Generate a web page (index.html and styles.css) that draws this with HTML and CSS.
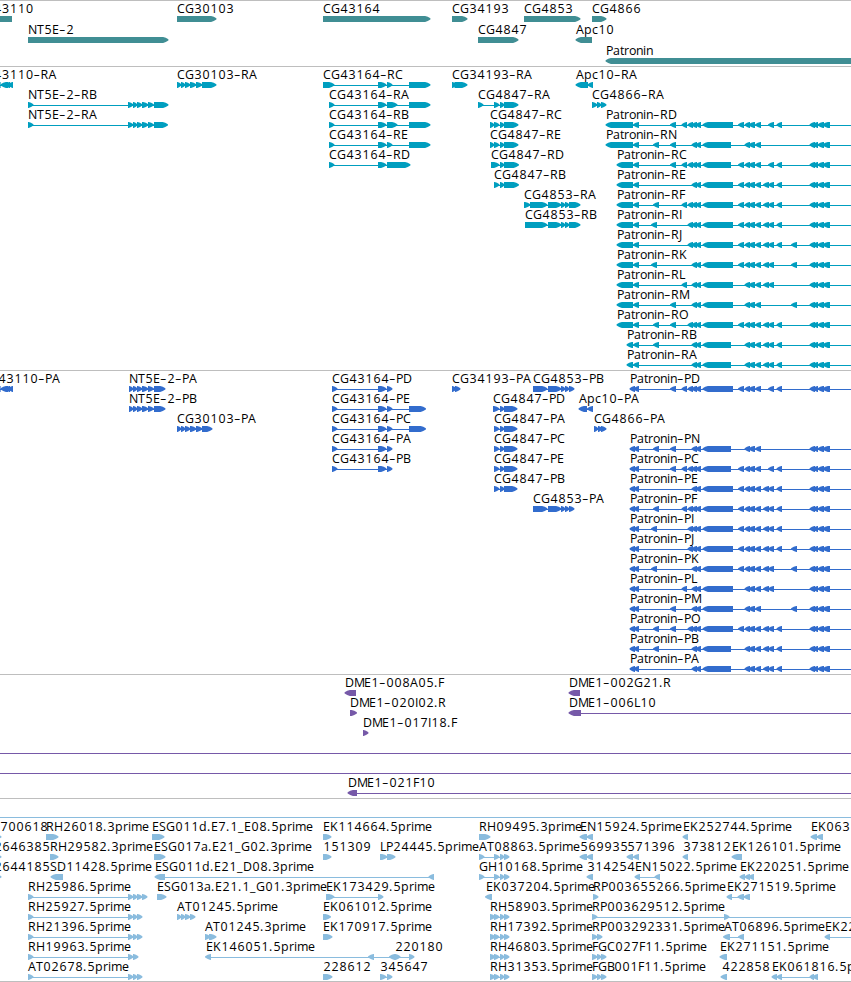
FILE: index.html
```html
<!DOCTYPE html>
<html lang="en">
<head>
<meta charset="utf-8">
<title>Genome tracks</title>
<link rel="stylesheet" href="styles.css">
</head>
<body>
<main class="browser">
  <section class="track genes" id="genes"></section>
  <section class="track transcripts" id="transcripts"></section>
  <section class="track proteins" id="proteins"></section>
  <section class="track clones" id="clones"></section>
  <section class="track ests" id="ests"></section>
</main>
<script src="tracks.js"></script>
</body>
</html>
```
FILE: styles.css
```css
body {
  margin: 0;
  background: #fff;
}

.browser {
  display: flex;
  flex-direction: column;
  width: 851px;
  height: 981px;
  overflow: hidden;
  border-bottom: 1px solid #bebebe;
}

.track {
  box-sizing: border-box;
  border-top: 1px solid #bebebe;
  overflow: hidden;
}

.track svg {
  display: block;
  width: 851px;
  height: 100%;
}

.track text {
  font: 12.4px "Open Sans", "Noto Sans", sans-serif;
  fill: #000;
}

.track .dash {
  font-size: 20px;
  font-weight: 300;
}

.track rect {
  shape-rendering: crispEdges;
}

.genes { height: 66px; color: #408e94; }
.transcripts { height: 304px; color: #009ebf; }
.proteins { height: 304px; color: #326ccd; }
.clones { height: 124px; color: #7659a8; }
.ests { height: 183px; color: #8abcde; }
```
FILE: tracks.js
```javascript
const SVG = "http://www.w3.org/2000/svg";
const WIDTH = 851;

// Horizontal advance of each label character, in pixels.
const ADVANCE = {
  A: 8, B: 7, C: 8, D: 9, E: 7, F: 6, G: 9, H: 9, I: 3, J: 4, K: 8, L: 6, M: 10,
  N: 9, O: 9, P: 7, R: 8, S: 7, T: 7, a: 7, c: 6, d: 8, e: 7, i: 3, m: 11, n: 7,
  o: 7, p: 8, r: 5, t: 4, "-": 7, ".": 4, _: 6
};

function add(parent, name, attrs) {
  const el = document.createElementNS(SVG, name);
  for (const key in attrs) el.setAttribute(key, attrs[key]);
  parent.appendChild(el);
  return el;
}

function drawLabel(svg, label, x, y) {
  const text = add(svg, "text", { y });
  // Hyphens are drawn wider than the font's own, lowered to the same height.
  for (const part of label.split(/(-)/)) {
    if (!part) continue;
    const xs = [];
    for (const ch of part) {
      const digit = ch >= "0" && ch <= "9";
      xs.push(x + (digit ? 0.4 : 0));
      x += digit ? 8 : ADVANCE[ch];
    }
    const attrs = { x: xs.join(" "), y: part === "-" ? y + 1.6 : y };
    if (part === "-") attrs.class = "dash";
    add(text, "tspan", attrs).textContent = part;
  }
}

function drawBlock(svg, x0, x1, y, dir) {
  const head = Math.min(x1 - x0, 5.5);
  const tip = dir > 0 ? x1 + 0.4 : x0 - 0.4;
  const base = dir > 0 ? x0 : x1;
  const neck = dir > 0 ? x1 - head + 0.6 : x0 + head - 0.6;
  const mid = (tip + neck) / 2;
  const pts = [[base, y], [neck, y], [mid, y + 0.8], [tip, y + 2.3], [tip, y + 3.5],
    [mid, y + 5.1], [neck, y + 6], [base, y + 6]];
  add(svg, "polygon", { points: pts.join(" "), fill: "currentColor" });
}

// Items: [label, label x, row, direction, blocks, optional line end]
function drawTrack(id, opts, items) {
  const svg = add(document.getElementById(id), "svg", {});
  for (const [label, x, row, dir, blocks, lineEnd] of items) {
    const top = opts.top + row * opts.pitch;
    const start = blocks.length ? blocks[0][0] + 1 : 0;
    const end = lineEnd || blocks[blocks.length - 1][1] - 1;
    if (blocks.length !== 1 || lineEnd) {
      add(svg, "rect", { x: start, y: top + 3, width: end - start, height: 1, fill: "currentColor" });
    }
    for (const [a, b] of blocks) drawBlock(svg, a, b, top, dir);
    if (label) drawLabel(svg, label, x, top - 3);
  }
  return svg;
}

const EXONS = {
  a: [[606, 633]], A: [[617, 633]], B: [[627, 633]], C: [[630, 635], [634, 639]],
  b: [[633.5, 639]], c: [[653.5, 659]], d: [[651.5, 657]], e: [[670.5, 676]],
  f: [[682, 687]], g: [[688, 693]], h: [[692, 697], [696, 701]],
  i: [[703, 733]], j: [[703, 731]], k: [[738.5, 744]], l: [[745, 750], [749, 755]],
  m: [[755.5, 761]], n: [[763.5, 769]], o: [[768.5, 774]], p: [[777, 782]],
  q: [[791.5, 797]], z: [[810, 815], [813.5, 818], [818, 824], [823, 830]]
};
const patronin = (suffix, x, row, code) =>
  ["Patronin-" + suffix, x, row, -1, [...code].flatMap(c => EXONS[c]), WIDTH];

drawTrack("genes", { top: 15, pitch: 21 }, [
  ["43110", -6.4, 0, -1, [[-10, 12]]],
  ["NT5E-2", 28, 1, 1, [[28, 168]]],
  ["CG30103", 177, 0, 1, [[177, 216]]],
  ["CG43164", 323, 0, 1, [[323, 430]]],
  ["CG34193", 452, 0, 1, [[452, 467]]],
  ["CG4847", 478, 1, 1, [[478, 518]]],
  ["CG4853", 524, 0, 1, [[524, 580]]],
  ["CG4866", 592, 0, 1, [[592, 606]]],
  ["Apc10", 576, 1, -1, [[576, 592]]],
  ["Patronin", 606, 2, -1, [[606, 860]]]
]);

const left = [[-6, 0.6], [1, 8], [5, 10], [8.5, 13]];
const nt = [[128, 133], [133, 137], [137, 142], [142, 148], [148, 153.5]];
const cg30 = [[177, 181], [181, 185], [185, 190], [190, 196], [196, 202]];
const tail48 = [[494, 499], [500, 504]];
const mid53 = [[548, 561], [561, 565], [565, 569]];

drawTrack("transcripts", { top: 15, pitch: 20 }, [
  ["43110-RA", -6.4, 0, -1, left],
  ["NT5E-2-RB", 28, 1, 1, [[28, 33], ...nt, [154, 168]]],
  ["NT5E-2-RA", 28, 2, 1, [[28, 33], ...nt, [154, 167.5]]],
  ["CG30103-RA", 177, 0, 1, [...cg30, [202, 216]]],
  ["CG43164-RC", 323, 0, 1, [[323, 334], [378, 386], [387, 392], [409, 430]]],
  ["CG43164-RA", 329, 1, 1, [[329, 334], [378, 386], [387, 397], [409, 430]]],
  ["CG43164-RB", 329, 2, 1, [[329, 334], [378, 386], [387, 397], [409, 430]]],
  ["CG43164-RE", 329, 3, 1, [[329, 334], [378, 386], [387, 392], [409, 430]]],
  ["CG43164-RD", 329, 4, 1, [[329, 334], [378, 386], [387, 410]]],
  ["CG34193-RA", 452, 0, 1, [[452, 456], [454.5, 467]]],
  ["CG4847-RA", 478, 1, 1, [[478, 483], ...tail48, [504, 518]]],
  ["CG4847-RC", 490, 2, 1, [[490, 494], ...tail48, [504, 518]]],
  ["CG4847-RE", 490, 3, 1, [[490, 494], ...tail48, [504, 518]]],
  ["CG4847-RD", 491, 4, 1, [[491, 499], [500, 504], [504, 518.5]]],
  ["CG4847-RB", 494, 5, 1, [...tail48, [504, 518.5]]],
  ["CG4853-RA", 524, 6, 1, [[524, 530], [530, 547], ...mid53, [569, 580]]],
  ["CG4853-RB", 525, 7, 1, [[525, 547], ...mid53, [569, 580]]],
  ["Apc10-RA", 576, 0, -1, [[576, 588], [588, 593]]],
  ["CG4866-RA", 592, 1, 1, [[592, 597], [597, 601], [601, 606]]],
  patronin("RD", 606, 2, "abefghiklmopz"),
  patronin("RN", 606, 3, "abcehjlmz"),
  patronin("RC", 617, 4, "Abefghjklmopz"),
  patronin("RE", 617, 5, "Abhiklmnopz"),
  patronin("RF", 617, 6, "Abcfghiklmnopz"),
  patronin("RI", 617, 7, "Abdghiklmnopz"),
  patronin("RJ", 617, 8, "Abghiklmnopqz"),
  patronin("RK", 617, 9, "Abdhiklmnoqz"),
  patronin("RL", 617, 10, "Abfhilmnoz"),
  patronin("RM", 617, 11, "Abehilmqz"),
  patronin("RO", 617, 12, "Abceghiklmnopz"),
  patronin("RB", 627, 13, "Bbchjlmnopz"),
  patronin("RA", 627, 14, "Bbhjlmnopz")
]);

const ntP = [[129, 133], ...nt.slice(1), [154, 165]];
const shortP = [[332, 337], [378, 386], [387, 392]];
const p48 = [...tail48, [504, 517]];
const p53 = [[533, 547], ...mid53, [569, 574]];

drawTrack("proteins", { top: 15, pitch: 20 }, [
  ["43110-PA", -2, 0, -1, left],
  ["NT5E-2-PA", 129, 0, 1, ntP],
  ["NT5E-2-PB", 129, 1, 1, ntP],
  ["CG30103-PA", 177, 2, 1, [...cg30, [202, 212]]],
  ["CG43164-PD", 332, 0, 1, shortP],
  ["CG43164-PE", 332, 1, 1, [...shortP, [409, 425.5]]],
  ["CG43164-PC", 332, 2, 1, [...shortP, [409, 425.5]]],
  ["CG43164-PA", 332, 3, 1, shortP],
  ["CG43164-PB", 332, 4, 1, shortP],
  ["CG34193-PA", 452, 0, 1, [[452, 456], [455, 460]]],
  ["CG4853-PB", 533, 0, 1, p53],
  ["CG4847-PD", 493, 1, 1, [[493, 499], [500, 504], [504, 517]]],
  ["CG4847-PA", 494, 2, 1, p48],
  ["CG4847-PC", 494, 3, 1, p48],
  ["CG4847-PE", 494, 4, 1, p48],
  ["CG4847-PB", 494, 5, 1, p48],
  ["CG4853-PA", 533, 6, 1, p53],
  ["Apc10-PA", 579, 1, -1, [[579, 587], [587.5, 593]]],
  ["CG4866-PA", 594, 2, 1, [[594, 598], [598, 602], [601, 606]]],
  patronin("PD", 630, 0, "Cefghiklmopz"),
  patronin("PN", 630, 3, "Ccehjlmz"),
  patronin("PC", 630, 4, "Cefghjklmopz"),
  patronin("PE", 630, 5, "Chiklmnopz"),
  patronin("PF", 630, 6, "Ccfghiklmnopz"),
  patronin("PI", 630, 7, "Cdghiklmnopz"),
  patronin("PJ", 630, 8, "Cghiklmnopqz"),
  patronin("PK", 630, 9, "Cdhiklmnoqz"),
  patronin("PL", 630, 10, "Cfhilmnoz"),
  patronin("PM", 630, 11, "Cehilmqz"),
  patronin("PO", 630, 12, "Cceghiklmnopz"),
  patronin("PB", 630, 13, "Cchjlmnopz"),
  patronin("PA", 630, 14, "Chjlmnopz")
]);

drawTrack("clones", { top: 15, pitch: 20 }, [
  ["DME1-008A05.F", 345, 0, -1, [[345, 356]]],
  ["DME1-020I02.R", 350, 1, 1, [[350, 356.5]]],
  ["DME1-017I18.F", 363, 2, 1, [[363, 368]]],
  ["DME1-002G21.R", 569, 0, -1, [[569, 580]]],
  ["DME1-006L10", 569, 1, -1, [[569, 581]], WIDTH],
  ["", 0, 3, 1, [], WIDTH],
  ["", 0, 4, 1, [], WIDTH],
  ["DME1-021F10", 348, 5, -1, [[348, 357]], WIDTH]
]);

const three = [[28, 33], [128, 133], [133, 137], [137, 142]];
const quad = [[490, 495], [494, 499], [500, 504], [504, 509]];
const spliced = [[479, 484], [494, 499], [500, 504], [504, 509]];
const fg = [[592, 597], [597, 601], [601, 606]];

drawTrack("ests", { top: 35, pitch: 20 }, [
  ["", 0, -1, 1, [], WIDTH],
  ["700618", 0, 0, 1, [[-8, 1]]],
  ["2646385", -6, 1, 1, [[-8, 1]]],
  ["2644185", -6, 2, 1, [[-8, 1]]],
  ["RH26018.3prime", 46, 0, 1, [[46, 58]]],
  ["RH29582.3prime", 50, 1, 1, [[50, 58]]],
  ["SD11428.5prime", 50, 2, -1, [[51, 63]]],
  ["RH25986.5prime", 28, 3, 1, [...three, [142, 147]]],
  ["RH25927.5prime", 28, 4, 1, three],
  ["RH21396.5prime", 28, 5, 1, three],
  ["RH19963.5prime", 28, 6, 1, [[28, 33], [128, 133], [133, 138]]],
  ["AT02678.5prime", 28, 7, 1, three],
  ["ESG011d.E7.1_E08.5prime", 152, 0, 1, [[152, 164]]],
  ["ESG017a.E21_G02.3prime", 154, 1, 1, [[154, 165]]],
  ["ESG011d.E21_D08.3prime", 155, 2, -1, [[155, 165], [429, 434]]],
  ["ESG013a.E21.1_G01.3prime", 157, 3, 1, [[157, 166]]],
  ["AT01245.5prime", 177, 4, 1, [[177, 181], [181, 185], [185, 190], [190, 195]]],
  ["AT01245.3prime", 205, 5, 1, [[205, 210], [209, 216]]],
  ["EK146051.5prime", 206, 6, -1, [[205.5, 211], [368.5, 374], [389.5, 395]]],
  ["EK114664.5prime", 323, 0, 1, [[323, 331]]],
  ["151309", 323, 1, 1, [[323, 331]]],
  ["LP24445.5prime", 380, 1, 1, [[380, 387], [387, 395]]],
  ["EK173429.5prime", 326, 3, 1, [[326, 334], [378, 383]]],
  ["EK061012.5prime", 323, 4, 1, [[323, 330.5]]],
  ["EK170917.5prime", 323, 5, 1, [[323, 332]]],
  ["220180", 395, 6, 1, [[395, 400], [409, 414]]],
  ["228612", 323, 7, 1, [[323, 332]]],
  ["345647", 380, 7, 1, [[380, 386], [387, 392]]],
  ["RH09495.3prime", 479, 0, 1, [[479, 490]]],
  ["AT08863.5prime", 479, 1, 1, spliced],
  ["GH10168.5prime", 479, 2, 1, spliced],
  ["EK037204.5prime", 486, 3, -1, [[485.5, 492]]],
  ["RH58903.5prime", 490, 4, 1, quad],
  ["RH17392.5prime", 490, 5, 1, quad],
  ["RH46803.5prime", 490, 6, 1, quad],
  ["RH31353.5prime", 490, 7, 1, quad],
  ["EN15924.5prime", 580, 0, -1, [[580, 587], [587, 593]]],
  ["569935", 580, 1, -1, [[580, 587], [587, 593]]],
  ["571396", 627, 1, -1, [[627, 633], [633.5, 639]]],
  ["314254", 587, 2, -1, [[587, 593]]],
  ["EN15022.5prime", 635, 2, -1, [[635, 640], [655, 660]]],
  ["RP003655266.5prime", 593, 3, 1, [[593, 598]]],
  ["RP003629512.5prime", 592, 4, 1, [[592, 597], [724, 729]], WIDTH],
  ["RP003292331.5prime", 592, 5, 1, [[592, 597], [597, 602]]],
  ["FGC027F11.5prime", 592, 6, 1, fg],
  ["FGB001F11.5prime", 592, 7, 1, fg],
  ["EK252744.5prime", 683, 0, -1, [[683, 688]]],
  ["373812", 683, 1, -1, [[683, 688]]],
  ["EK126101.5prime", 732, 1, -1, [[732, 742]]],
  ["EK220251.5prime", 740, 2, -1, [[740, 745], [745, 750], [749, 754]]],
  ["EK271519.5prime", 727, 3, -1, [[727, 732], [738, 744], [744, 750]]],
  ["AT06896.5prime", 724, 5, -1, [[723.5, 730], [738.5, 744]]],
  ["EK271151.5prime", 720, 6, -1, [[720, 727]]],
  ["422858", 722, 7, -1, [[721, 727]]],
  ["EK061816.5p", 772, 7, -1, [[772, 777], [777, 782], [810, 814], [813, 818]]],
  ["EK063", 811, 0, -1, [[811, 817], [817, 823]]],
  ["EK22", 825, 5, -1, [[825, 830]], WIDTH]
]);
```
